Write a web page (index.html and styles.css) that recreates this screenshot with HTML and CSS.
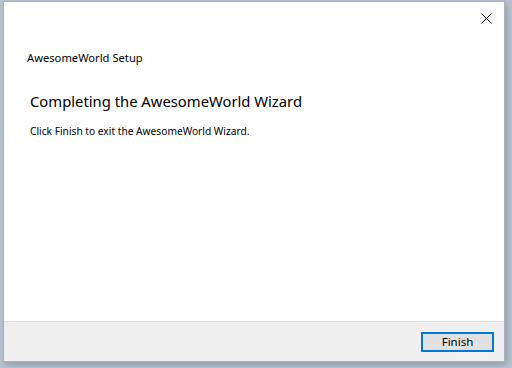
FILE: index.html
```html
<!DOCTYPE html>
<html lang="en">
<head>
    <meta charset="UTF-8">
    <title>AwesomeWorld Setup</title>
    <link rel="stylesheet" href="styles.css">
</head>
<body>
    <div class="window">
        <div class="titlebar">
            <svg class="close" viewBox="0 0 11 11" width="11" height="11">
                <path d="M0.5 0.5 L10.5 10.5 M10.5 0.5 L0.5 10.5" stroke="#000" stroke-width="1" fill="none"/>
            </svg>
        </div>
        <div class="main">
            <div class="caption">AwesomeWorld Setup</div>
            <h1>Completing the AwesomeWorld Wizard</h1>
            <p>Click Finish to exit the AwesomeWorld Wizard.</p>
        </div>
        <div class="footer">
            <button class="btn default">Finish</button>
        </div>
    </div>
</body>
</html>
```

FILE: styles.css
```css
html, body {
    margin: 0;
    height: 100%;
}
body {
    background: #b9c3d1;
    font-family: "Noto Sans", "Open Sans", sans-serif;
    color: #000;
    padding: 1px 7px 6px 3px;
    box-sizing: border-box;
}
.window {
    height: 361px;
    background: #fff;
    border: 1px solid #a9b1bd;
    box-sizing: border-box;
    display: flex;
    flex-direction: column;
    box-shadow: 2px 3px 6px rgba(70, 85, 110, 0.35);
}
.titlebar {
    height: 30px;
    display: flex;
    justify-content: flex-end;
    align-items: center;
    padding-right: 12px;
}
.close {
    display: block;
    margin-top: 2px;
}
.main {
    flex: 1;
    padding: 18px 0 0 23px;
}
.caption {
    font-size: 11.2px;
    line-height: 16px;
}
h1 {
    font-size: 14.8px;
    font-weight: normal;
    line-height: 20px;
    margin: 25px 0 0 3px;
}
p {
    font-size: 10.2px;
    line-height: 14px;
    margin: 13px 0 0 3px;
}
.footer {
    height: 40px;
    background: #f0f0f0;
    border-top: 1px solid #dfdfdf;
    display: flex;
    justify-content: flex-end;
    align-items: flex-start;
    padding: 10px 10px 0 0;
    box-sizing: border-box;
}
.btn {
    width: 73px;
    height: 20px;
    font-family: inherit;
    font-size: 11.5px;
    color: #000;
    background: #e1e1e1;
    border: 2px solid #0078d7;
    padding: 0;
    line-height: 14px;
}
```
